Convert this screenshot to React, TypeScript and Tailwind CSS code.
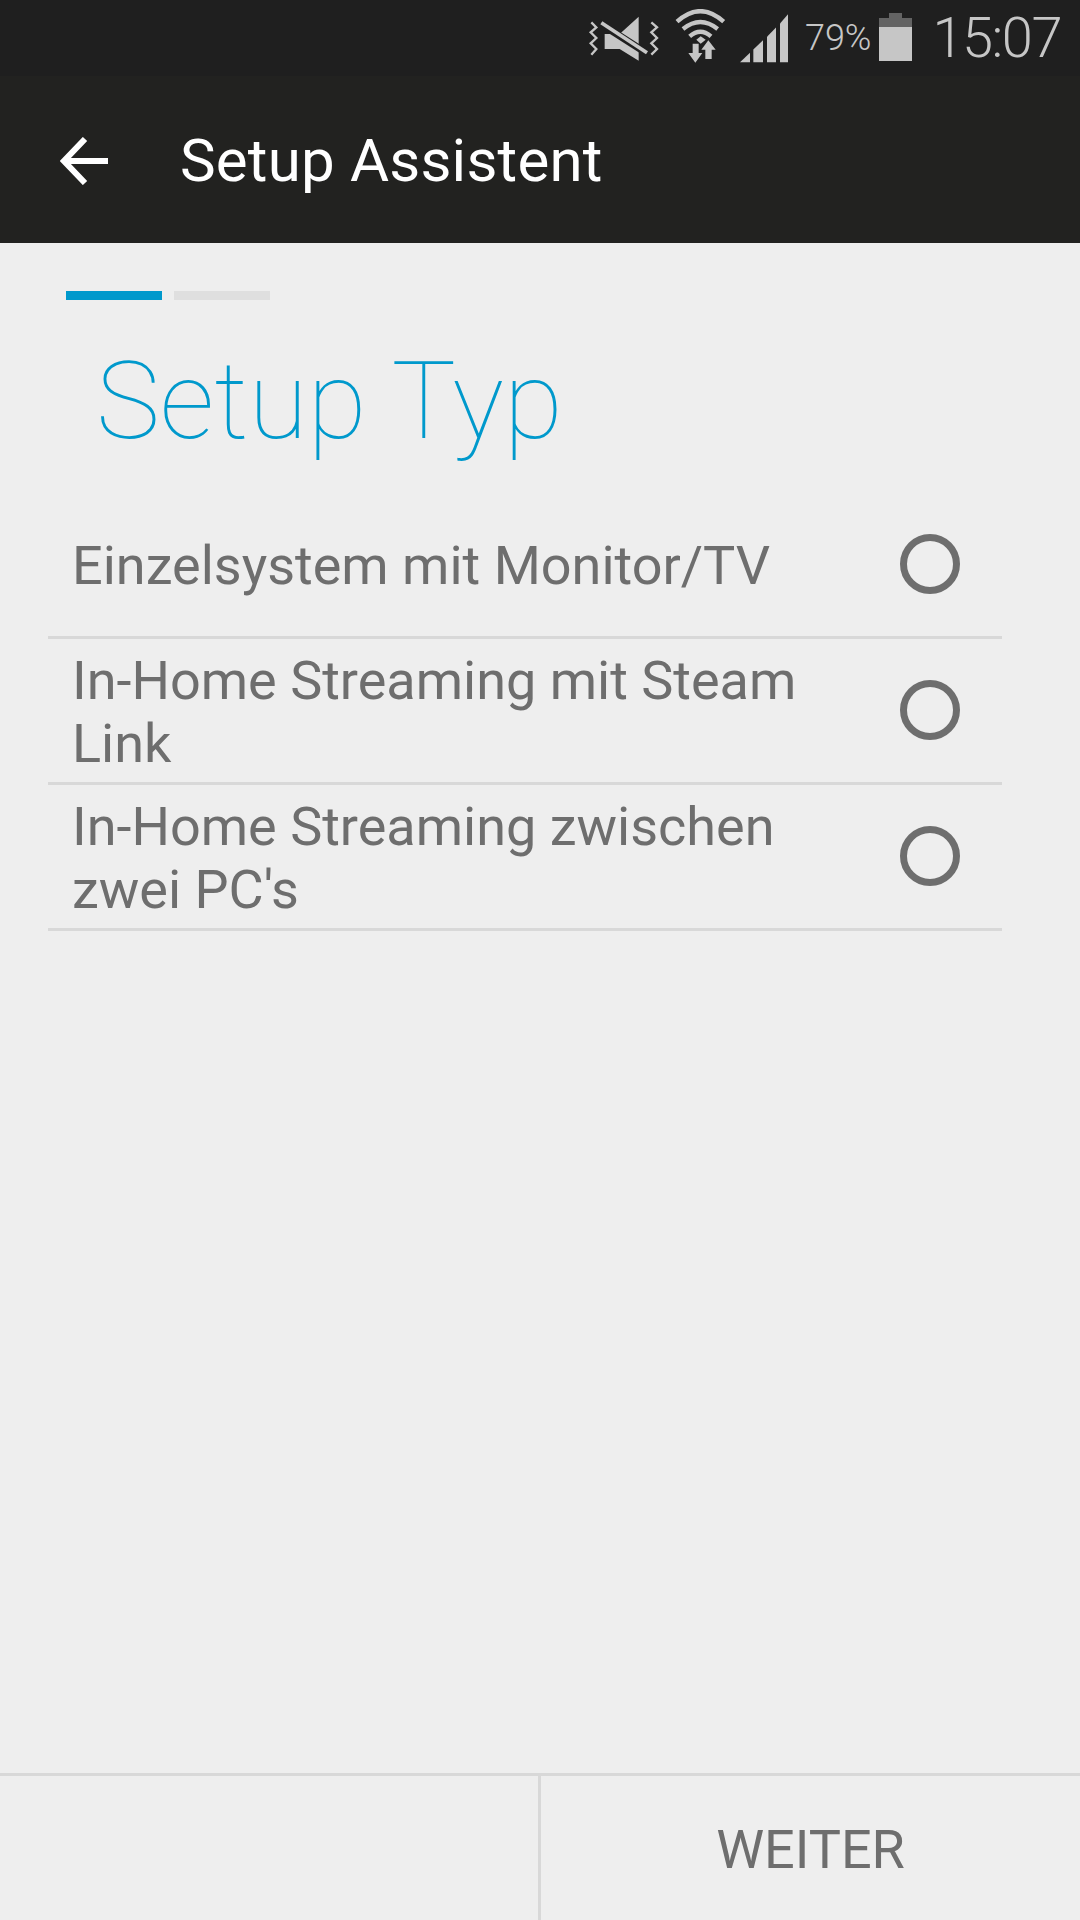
import React from 'react';

const options = [
    'Einzelsystem mit Monitor/TV',
    'In-Home Streaming mit Steam Link',
    "In-Home Streaming zwischen zwei PC's",
];

function MuteIcon() {
    return (
        <svg width="72" height="48" viewBox="85 40 216 144" className="block">
            <path d="M135 100 H180 L237 48 V180 L180 145 H135 Z" fill="#c6c6c6" />
            <path d="M118 66 L265 160" stroke="#1f1f1f" strokeWidth="22" fill="none" />
            <path d="M125 66 L262 156" stroke="#c6c6c6" strokeWidth="11" fill="none" />
            <path d="M95 65 L110 80 L93 95 L110 112 L93 128 L110 145 L95 162" stroke="#c6c6c6" strokeWidth="7" fill="none" />
            <path d="M275 65 L292 80 L275 95 L292 112 L275 128 L292 145 L275 162" stroke="#c6c6c6" strokeWidth="7" fill="none" />
        </svg>
    );
}

function WifiIcon() {
    return (
        <svg width="52" height="56" viewBox="344 30 156 168" className="block">
            <path d="M350 68 Q420 5 490 68" stroke="#c6c6c6" strokeWidth="13" fill="none" />
            <path d="M368 90 Q420 48 472 90" stroke="#c6c6c6" strokeWidth="13" fill="none" />
            <path d="M388 112 Q420 84 452 112" stroke="#c6c6c6" strokeWidth="13" fill="none" />
            <path d="M408 122 L421 112 L436 122 L421 134 Z" fill="#c6c6c6" />
            <path d="M397 134 H415 V162 H426 L405 191 L384 162 H397 Z" fill="#c6c6c6" />
            <path d="M435 180 H454 V152 H466 L444 124 L423 152 H435 Z" fill="#c6c6c6" />
        </svg>
    );
}

function SignalIcon() {
    return (
        <svg width="48" height="50" viewBox="537 40 144 147" className="block">
            <path d="M537 186 L567 158 V186 Z" fill="#c6c6c6" />
            <path d="M577 186 V148 L606 120 V186 Z" fill="#c6c6c6" />
            <path d="M618 186 V110 L645 82 V186 Z" fill="#c6c6c6" />
            <path d="M657 186 V70 L681 42 V186 Z" fill="#c6c6c6" />
        </svg>
    );
}

function BatteryIcon() {
    return (
        <svg width="33" height="48" viewBox="960 39 99 144" className="block">
            <path d="M990 39 H1029 V54 H1059 V81 H960 V54 H990 Z" fill="#636363" />
            <rect x="960" y="81" width="99" height="102" fill="#c6c6c6" />
        </svg>
    );
}

function StatusBar() {
    return (
        <div className="flex h-[76px] items-center justify-end bg-[#1f1f1f] pr-[19px] pt-[4px] pb-[4px] text-[#c6c6c6]">
            <div className="mr-[15px]"><MuteIcon /></div>
            <div className="mr-[13px] -mt-[2px]"><WifiIcon /></div>
            <div className="mr-[17px]"><SignalIcon /></div>
            <span className="mr-[8px] text-[36px] font-light leading-none">79%</span>
            <div className="mr-[20px] -mt-[2px]"><BatteryIcon /></div>
            <span className="text-[56px] font-light leading-none tracking-[-1.5px]">15:07</span>
        </div>
    );
}

function ActionBar() {
    return (
        <div className="flex h-[167px] items-center bg-[#222220] pt-[2px] text-white">
            <svg width="50" height="48" viewBox="0 0 50 48" className="ml-[60px] block">
                <path d="M48 24 H4 M25 2 L4 24 L25 46" stroke="#ffffff" strokeWidth="6" fill="none" />
            </svg>
            <span className="ml-[70px] text-[60px] leading-none tracking-[0.2px]">Setup Assistent</span>
        </div>
    );
}

function OptionRow({ label }: { label: string }) {
    return (
        <div className="flex h-[146px] items-center border-b-[3px] border-[#d8d8d8]">
            <p className="ml-[24px] w-[790px] pt-[2px] text-[54px] leading-[63px] text-[#6e6e6e]">{label}</p>
            <div className="mb-[2px] ml-auto mr-[42px] h-[60px] w-[60px] rounded-full border-[7px] border-[#6e6e6e]"></div>
        </div>
    );
}

export default function App() {
    return (
        <div className="flex h-[1920px] w-[1080px] flex-col bg-[#eeeeee] font-['Roboto',sans-serif]">
            <StatusBar />
            <ActionBar />
            <div className="flex-1">
                <div className="ml-[66px] mt-[48px] flex gap-[12px]">
                    <div className="h-[9px] w-[96px] bg-[#0099cc]"></div>
                    <div className="h-[9px] w-[96px] bg-[#dfdfdf]"></div>
                </div>
                <h1 className="ml-[96px] mt-[38px] h-[155px] text-[108px] font-thin leading-[127px] [word-spacing:1px] text-[#0099cc]">Setup Typ</h1>
                <div className="ml-[48px] w-[954px]">
                    {options.map((o) => <OptionRow key={o} label={o} />)}
                </div>
            </div>
            <div className="flex h-[147px] border-t-[3px] border-[#d8d8d8]">
                <div className="w-[541px] border-r-[3px] border-[#d8d8d8]"></div>
                <div className="flex flex-1 items-center justify-center pt-[2px] text-[54px] text-[#6e6e6e]">WEITER</div>
            </div>
        </div>
    );
}
